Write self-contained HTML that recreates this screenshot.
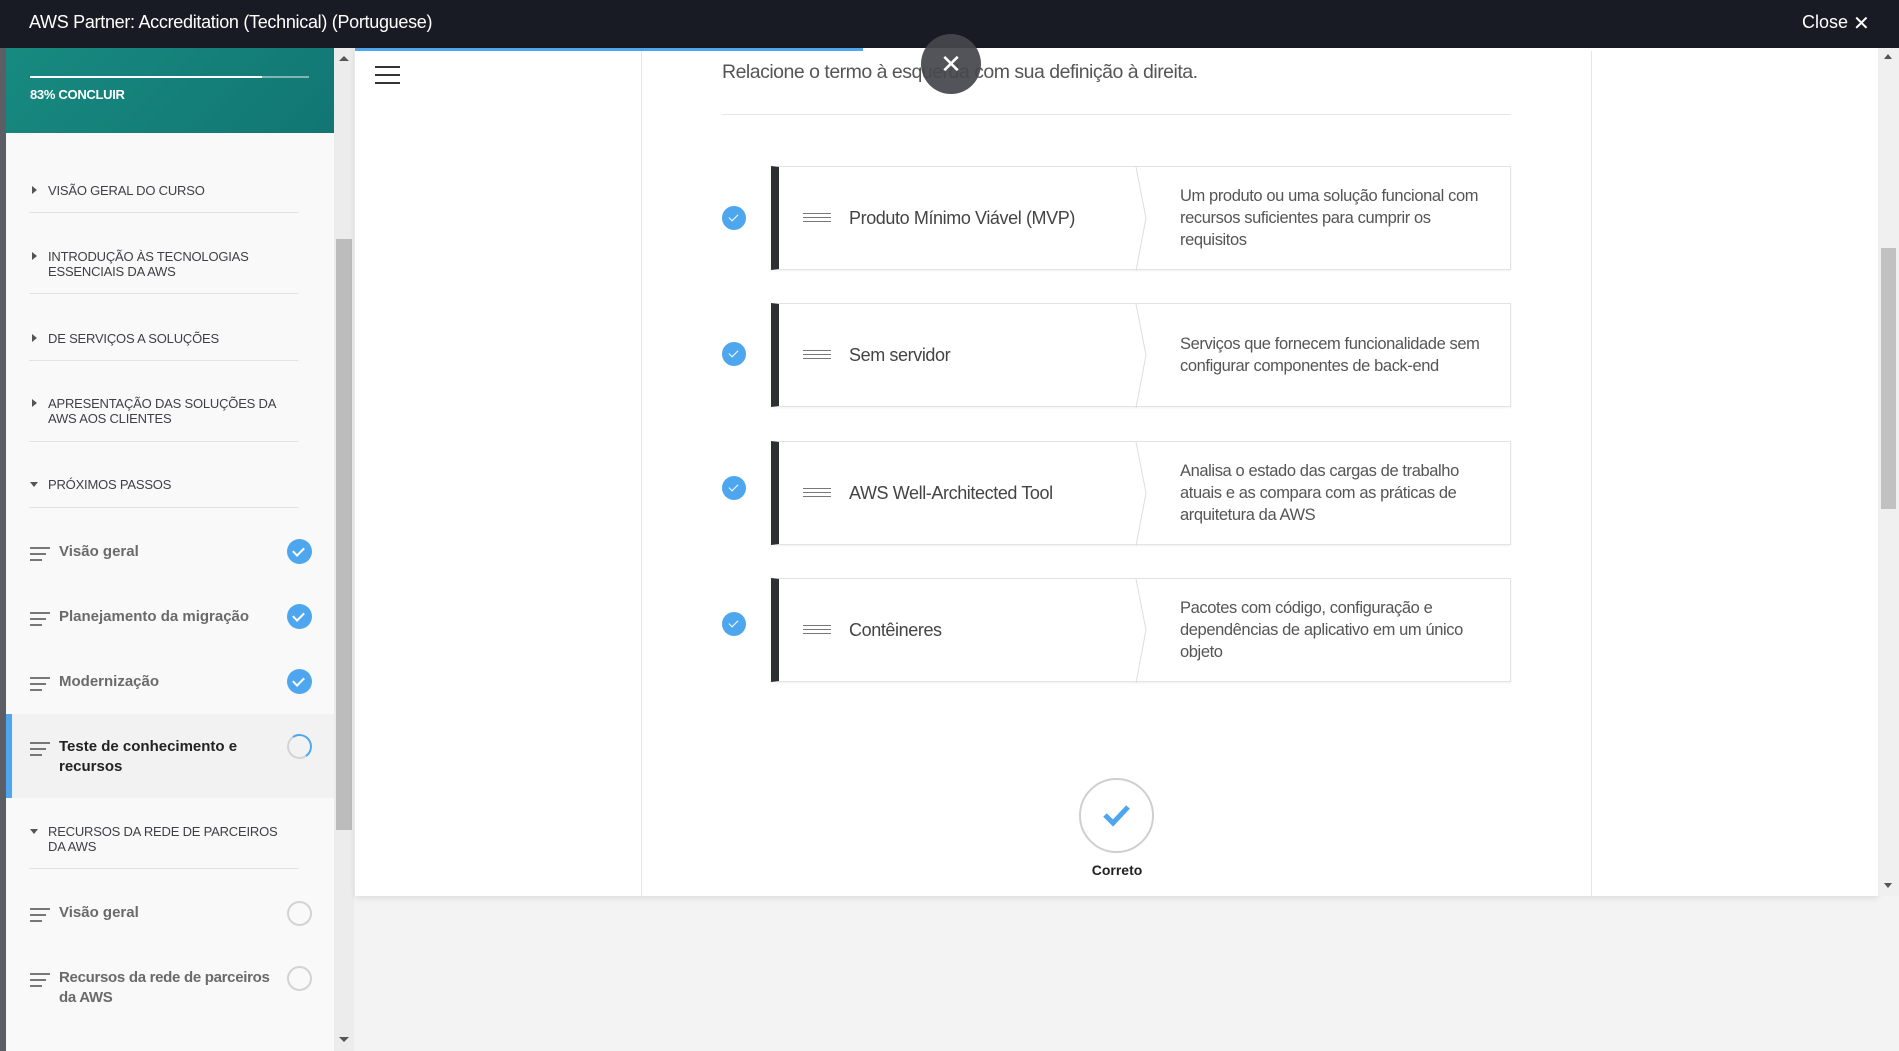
<!DOCTYPE html>
<html><head><meta charset="utf-8"><style>
*{margin:0;padding:0;box-sizing:border-box}
body{width:1899px;height:1051px;overflow:hidden;background:#f3f3f3;font-family:"Liberation Sans",sans-serif;position:relative}
.a{position:absolute}
.hdr{left:0;top:0;width:1899px;height:48px;background:#181b23;color:#fff}
.side{left:6px;top:48px;width:328px;height:1003px;background:#f9f9f9}
.ch{position:absolute;left:48px;font-size:13px;color:#3f3f44;line-height:15px;text-transform:uppercase;letter-spacing:-.2px}
.tri{position:absolute;left:32px;width:0;height:0;border-top:4px solid transparent;border-bottom:4px solid transparent;border-left:5px solid #555}
.trid{position:absolute;left:30px;width:0;height:0;border-left:4px solid transparent;border-right:4px solid transparent;border-top:5px solid #555}
.sep{position:absolute;left:29px;width:269px;height:1px;background:#e2e2e2}
.ls{position:absolute;left:59px;font-size:15px;font-weight:bold;color:#6a6a6a;line-height:20px}
.li{position:absolute;left:30px;width:20px}
.li i{display:block;height:2px;background:#777;margin-bottom:4px}
.ck{position:absolute;left:287px;width:25px;height:25px;border-radius:50%;background:#4ea6ee}
.ck:after{content:"";position:absolute;left:8px;top:6px;width:5px;height:9px;border:solid #fff;border-width:0 2.5px 2.5px 0;transform:rotate(45deg)}
.oc{position:absolute;left:287px;width:25px;height:25px;border-radius:50%;border:2.5px solid #d3d3d3}
.row{position:absolute;left:771px;width:740px;height:104px;background:#fff;border:1px solid #e3e3e3;border-left:8px solid #2d2f33;box-shadow:0 1px 2px rgba(0,0,0,.06)}
.row .t{position:absolute;left:70px;top:0;height:102px;display:flex;align-items:center;font-size:18px;color:#444;letter-spacing:-.4px}
.row .d{position:absolute;left:401px;top:0;height:102px;width:318px;display:flex;align-items:center;font-size:16.5px;line-height:22px;color:#555;letter-spacing:-.4px}
.row svg{position:absolute;left:355px;top:0}
.dh{position:absolute;left:24px;top:46px;width:28px}
.dh i{display:block;height:1px;background:#777;margin-bottom:3px}
.rc{position:absolute;left:722px;width:24px;height:24px;border-radius:50%;background:#4ea6ee}
.rc:after{content:"";position:absolute;left:9px;top:6px;width:4px;height:8px;border:solid #fff;border-width:0 1.5px 1.5px 0;transform:rotate(45deg)}
</style></head><body>
<div class="a hdr"><div class="a" style="left:29px;top:12px;font-size:18px;letter-spacing:-.3px">AWS Partner: Accreditation (Technical) (Portuguese)</div>
<div class="a" style="left:1802px;top:12px;font-size:18px">Close</div>
<div class="a" style="left:1853px;top:14px;font-size:20px;line-height:20px">✕</div></div>
<div class="a" style="left:0;top:48px;width:6px;height:1003px;background:#5b5e64"></div>
<div class="a side"></div>
<div class="a" style="left:6px;top:48px;width:328px;height:85px;background:linear-gradient(135deg,#178a80,#127673)"></div>
<div class="a" style="left:30px;top:76px;width:279px;height:2px;background:rgba(255,255,255,.45)"></div>
<div class="a" style="left:30px;top:76px;width:232px;height:2px;background:#fff"></div>
<div class="a" style="left:30px;top:87px;font-size:13px;font-weight:bold;color:#fff;letter-spacing:-.3px">83% CONCLUIR</div>

<div class="tri" style="top:186px"></div><div class="ch" style="top:183px">Visão geral do curso</div><div class="sep" style="top:212px"></div>
<div class="tri" style="top:252px"></div><div class="ch" style="top:249px">Introdução às tecnologias<br>essenciais da AWS</div><div class="sep" style="top:293px"></div>
<div class="tri" style="top:334px"></div><div class="ch" style="top:331px">De serviços a soluções</div><div class="sep" style="top:360px"></div>
<div class="tri" style="top:399px"></div><div class="ch" style="top:396px">Apresentação das soluções da<br>AWS aos clientes</div><div class="sep" style="top:441px"></div>
<div class="trid" style="top:482px"></div><div class="ch" style="top:477px">Próximos passos</div><div class="sep" style="top:507px"></div>

<div class="li" style="top:547px"><i></i><i style="width:16px"></i><i style="width:12px"></i></div><div class="ls" style="top:542px">Visão geral</div><div class="ck" style="top:539px"></div>
<div class="li" style="top:612px"><i></i><i style="width:16px"></i><i style="width:12px"></i></div><div class="ls" style="top:607px">Planejamento da migração</div><div class="ck" style="top:604px"></div>
<div class="li" style="top:677px"><i></i><i style="width:16px"></i><i style="width:12px"></i></div><div class="ls" style="top:672px">Modernização</div><div class="ck" style="top:669px"></div>
<div class="a" style="left:6px;top:714px;width:328px;height:84px;background:#f2f2f2;border-left:6px solid #4ea6ee"></div>
<div class="li" style="top:742px"><i></i><i style="width:16px"></i><i style="width:12px"></i></div><div class="ls" style="top:737px;color:#222">Teste de conhecimento e<br>recursos</div>
<div class="oc" style="top:734px;border-top-color:#4ea6ee;border-right-color:#4ea6ee;transform:rotate(10deg)"></div>
<div class="trid" style="top:829px"></div><div class="ch" style="top:824px">Recursos da rede de parceiros<br>da AWS</div><div class="sep" style="top:868px"></div>
<div class="li" style="top:908px"><i></i><i style="width:16px"></i><i style="width:12px"></i></div><div class="ls" style="top:903px">Visão geral</div><div class="oc" style="top:901px"></div>
<div class="li" style="top:973px"><i></i><i style="width:16px"></i><i style="width:12px"></i></div><div class="ls" style="top:968px;letter-spacing:-.3px">Recursos da rede de parceiros<br>da AWS</div><div class="oc" style="top:966px"></div>

<div class="a" style="left:334px;top:48px;width:20px;height:1003px;background:#ececec"></div>
<div class="a" style="left:336px;top:239px;width:16px;height:591px;background:#bcbcbc"></div>
<div class="a" style="left:339px;top:56px;border-left:5px solid transparent;border-right:5px solid transparent;border-bottom:5px solid #555"></div>
<div class="a" style="left:339px;top:1037px;border-left:5px solid transparent;border-right:5px solid transparent;border-top:5px solid #555"></div>

<div class="a" style="left:355px;top:48px;width:1523px;height:848px;background:#fff;box-shadow:0 2px 6px rgba(0,0,0,.1)"></div>
<div class="a" style="left:355px;top:48px;width:508px;height:3px;background:#4ea6ee"></div>
<div class="a" style="left:641px;top:51px;width:1px;height:845px;background:#e6e6e6"></div>
<div class="a" style="left:1591px;top:51px;width:1px;height:845px;background:#e6e6e6"></div>
<div class="a" style="left:375px;top:66px;width:25px"><div style="height:2px;background:#333;margin-bottom:6px"></div><div style="height:2px;background:#333;margin-bottom:6px"></div><div style="height:2px;background:#333"></div></div>
<div class="a" style="left:722px;top:61px;font-size:19.5px;color:#555;letter-spacing:-.5px">Relacione o termo à esquerda com sua definição à direita.</div>
<div class="a" style="left:921px;top:34px;width:60px;height:60px;border-radius:50%;background:rgba(70,71,76,.93);color:#fff;font-size:26px;text-align:center;line-height:60px">✕</div>
<div class="a" style="left:722px;top:114px;width:789px;height:1px;background:#e6e6e6"></div>

<div class="rc" style="top:206px"></div>
<div class="row" style="top:166px"><div class="dh"><i></i><i></i><i></i></div><div class="t">Produto Mínimo Viável (MVP)</div><svg width="30" height="104"><path d="M2 0 L12 51 L2 104" fill="none" stroke="#ddd"/></svg><div class="d">Um produto ou uma solução funcional com recursos suficientes para cumprir os requisitos</div></div>
<div class="rc" style="top:342px"></div>
<div class="row" style="top:303px"><div class="dh"><i></i><i></i><i></i></div><div class="t">Sem servidor</div><svg width="30" height="104"><path d="M2 0 L12 51 L2 104" fill="none" stroke="#ddd"/></svg><div class="d">Serviços que fornecem funcionalidade sem configurar componentes de back-end</div></div>
<div class="rc" style="top:476px"></div>
<div class="row" style="top:441px"><div class="dh"><i></i><i></i><i></i></div><div class="t">AWS Well-Architected Tool</div><svg width="30" height="104"><path d="M2 0 L12 51 L2 104" fill="none" stroke="#ddd"/></svg><div class="d">Analisa o estado das cargas de trabalho atuais e as compara com as práticas de arquitetura da AWS</div></div>
<div class="rc" style="top:612px"></div>
<div class="row" style="top:578px"><div class="dh"><i></i><i></i><i></i></div><div class="t">Contêineres</div><svg width="30" height="104"><path d="M2 0 L12 51 L2 104" fill="none" stroke="#ddd"/></svg><div class="d">Pacotes com código, configuração e dependências de aplicativo em um único objeto</div></div>

<div class="a" style="left:1079px;top:778px;width:75px;height:75px;border-radius:50%;border:2px solid #cfcfcf"></div>
<svg class="a" style="left:1100px;top:800px" width="34" height="30"><path d="M5 15 L13 23 L28 7" fill="none" stroke="#4ea6ee" stroke-width="5"/></svg>
<div class="a" style="left:1080px;top:862px;width:74px;text-align:center;font-size:14px;font-weight:bold;color:#222">Correto</div>

<div class="a" style="left:1878px;top:48px;width:21px;height:848px;background:#f0f0f0"></div>
<div class="a" style="left:1881px;top:248px;width:15px;height:261px;background:#c1c1c1"></div>
<div class="a" style="left:1884px;top:54px;border-left:4px solid transparent;border-right:4px solid transparent;border-bottom:5px solid #555"></div>
<div class="a" style="left:1884px;top:883px;border-left:4px solid transparent;border-right:4px solid transparent;border-top:5px solid #555"></div>
</body></html>
